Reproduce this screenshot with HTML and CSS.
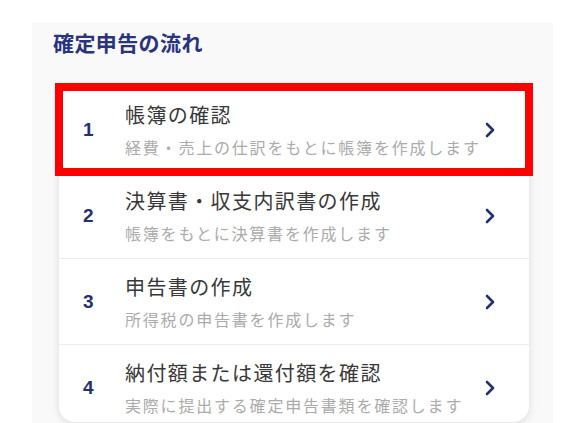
FILE: index.html
```html
<!DOCTYPE html>
<html lang="ja">
<head>
  <meta charset="UTF-8" />
  <meta name="viewport" content="width=device-width, initial-scale=1" />
  <title>確定申告の流れ</title>
  <link rel="stylesheet" href="styles.css">
</head>
<body>
  <section class="panel">
    <h2 class="panel-title">確定申告の流れ</h2>

    <ul class="steps">
      <li class="step is-marked">
        <span class="step-num">1</span>
        <div class="step-body">
          <div class="step-title">帳簿の確認</div>
          <div class="step-desc">経費・売上の仕訳をもとに帳簿を作成します</div>
        </div>
        <svg class="chevron" viewBox="0 0 10 16" aria-hidden="true"><polyline points="2,2 8,8 2,14" /></svg>
      </li>
      <li class="step">
        <span class="step-num">2</span>
        <div class="step-body">
          <div class="step-title">決算書・収支内訳書の作成</div>
          <div class="step-desc">帳簿をもとに決算書を作成します</div>
        </div>
        <svg class="chevron" viewBox="0 0 10 16" aria-hidden="true"><polyline points="2,2 8,8 2,14" /></svg>
      </li>
      <li class="step">
        <span class="step-num">3</span>
        <div class="step-body">
          <div class="step-title">申告書の作成</div>
          <div class="step-desc">所得税の申告書を作成します</div>
        </div>
        <svg class="chevron" viewBox="0 0 10 16" aria-hidden="true"><polyline points="2,2 8,8 2,14" /></svg>
      </li>
      <li class="step">
        <span class="step-num">4</span>
        <div class="step-body">
          <div class="step-title">納付額または還付額を確認</div>
          <div class="step-desc">実際に提出する確定申告書類を確認します</div>
        </div>
        <svg class="chevron" viewBox="0 0 10 16" aria-hidden="true"><polyline points="2,2 8,8 2,14" /></svg>
      </li>
    </ul>
  </section>
</body>
</html>
```

FILE: styles.css
```css
* {
  box-sizing: border-box;
}

body {
  margin: 0;
  background: #ffffff;
  font-family: "Noto Sans CJK JP", "Noto Sans", sans-serif;
  color: #333333;
  overflow: hidden;
  height: 423px;
}

.panel {
  margin: 23px 0 0 32px;
  width: 521px;
  min-height: 400px;
  background: #f9f9f9;
  padding: 5px 24px 0 21px;
}

.panel-title {
  margin: 0 0 31px;
  font-size: 21px;
  line-height: 28px;
  font-weight: 700;
  letter-spacing: 0.4px;
  color: #2a3380;
}

.steps {
  list-style: none;
  margin: 0 0 0 6px;
  padding: 0;
  background: #ffffff;
  border-radius: 16px;
  box-shadow: 0 2px 8px rgba(0, 0, 0, 0.12);
}

.step {
  display: flex;
  align-items: center;
  padding: 14px 34px 14px 24px;
  border-top: 1px solid #ececec;
}

.step:first-child {
  border-top: none;
}

.step:last-child {
  padding-bottom: 6px;
}

/* red annotation around the first step */
.step.is-marked {
  outline: 8px solid #ff0000;
  outline-offset: -4px;
  position: relative;
  z-index: 1;
}

.step-num {
  width: 42px;
  flex: none;
  font-size: 19px;
  font-weight: 700;
  color: #25306f;
  font-family: "Liberation Sans", Arial, sans-serif;
}

.step-body {
  flex: 1;
  min-width: 0;
}

.step-title {
  font-size: 20px;
  line-height: 28px;
  letter-spacing: 1.4px;
  color: #383838;
  white-space: nowrap;
}

.step-desc {
  margin-top: 7px;
  font-size: 16px;
  line-height: 22px;
  letter-spacing: 1.8px;
  color: #ababab;
  white-space: nowrap;
}

.chevron {
  width: 10px;
  height: 16px;
  flex: none;
  fill: none;
  stroke: #25306f;
  stroke-width: 2.6;
  stroke-linecap: round;
  stroke-linejoin: round;
}
```
